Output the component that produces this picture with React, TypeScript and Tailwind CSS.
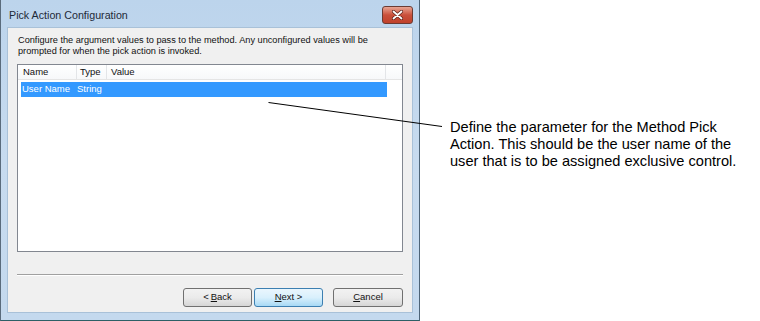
import React from "react";

export default function App() {
  const ui = { fontFamily: '"Liberation Sans", Arial, sans-serif' };
  return (
    <div className="relative w-[760px] h-[321px] bg-white flex" style={ui}>
      {/* Dialog window */}
      <div className="w-[420px] h-[321px] flex flex-col border-l border-l-[#5a6b7c] border-r border-r-[#4d6478] border-b border-b-[#2d5f66] bg-gradient-to-b from-[#bcd4ec] via-[#c7dbef] to-[#c4d9ee]">
        {/* Title bar */}
        <div className="h-[27px] flex items-center pl-[8px] pr-[5px] shrink-0">
          <span className="text-[10.7px] text-[#1e2a38] flex-1 pt-[3px]">Pick Action Configuration</span>
          <div className="w-[31px] h-[18px] mt-[3px] mr-[1px] rounded-[3px] border border-[#6b3b33] bg-gradient-to-b from-[#e8a493] via-[#c9503b] to-[#c0412b] flex items-center justify-center">
            <svg width="11" height="10" viewBox="0 0 11 10">
              <path d="M1.5 1.5 L9.5 8.5 M9.5 1.5 L1.5 8.5" stroke="#5a2018" strokeWidth="3.2" strokeLinecap="round" />
              <path d="M1.5 1.5 L9.5 8.5 M9.5 1.5 L1.5 8.5" stroke="#ffffff" strokeWidth="1.8" strokeLinecap="round" />
            </svg>
          </div>
        </div>
        {/* Client */}
        <div className="mx-[6px] mb-[7px] flex-1 border border-[#a9c1d8] bg-[#f0f0f0] flex flex-col pt-[7px] pl-[9px] pr-[9px]">
          <div className="text-[9.2px] leading-[11px] text-[#111] pl-[1px]">
            <div>Configure the argument values to pass to the method. Any unconfigured values will be</div>
            <div>prompted for when the pick action is invoked.</div>
          </div>
          {/* List */}
          <div className="mt-[7px] h-[188px] border border-[#828790] bg-white flex flex-col">
            <div className="h-[15px] flex text-[9.5px] text-[#111] border-b border-[#e5e5e5] bg-gradient-to-b from-white to-[#f7f8fa]">
              <div className="w-[59px] pl-[5px] flex items-center border-r border-[#e3e5e8]">Name</div>
              <div className="w-[30px] pl-[3px] flex items-center border-r border-[#e3e5e8]">Type</div>
              <div className="w-[279px] pl-[4px] flex items-center border-r border-[#e3e5e8]">Value</div>
              <div className="flex-1" />
            </div>
            <div className="mt-[2px] ml-[3px] w-[366px] h-[15px] bg-[#3399ff] flex items-center text-[9.5px] text-white">
              <div className="w-[56px] pl-[1px]">User Name</div>
              <div>String</div>
            </div>
          </div>
          {/* Separator */}
          <div className="mt-[22px] h-[1px] bg-[#a0a0a0] border-b border-white box-content" />
          {/* Buttons */}
          <div className="mt-[12px] flex justify-end text-[9.5px] text-[#111]">
            <button className="w-[69px] h-[19px] rounded-[3px] border border-[#707070] bg-gradient-to-b from-[#f2f2f2] via-[#ebebeb] to-[#d6d6d6] flex items-center justify-center">
              &lt; <span className="underline ml-[2px]">B</span>ack
            </button>
            <button className="ml-[2px] w-[69px] h-[19px] rounded-[3px] border border-[#3c7fb1] bg-gradient-to-b from-[#eaf6fd] via-[#d9f0fc] to-[#a7d9f5] flex items-center justify-center">
              <span className="underline">N</span>ext &gt;
            </button>
            <button className="ml-[10px] w-[70px] h-[19px] rounded-[3px] border border-[#707070] bg-gradient-to-b from-[#f2f2f2] via-[#ebebeb] to-[#d6d6d6] flex items-center justify-center">
              <span className="underline">C</span>ancel
            </button>
          </div>
        </div>
      </div>
      {/* Annotation text */}
      <div className="pl-[30px] pt-[119px] text-[14.6px] leading-[17px] text-black" style={{ fontFamily: '"Liberation Sans", Arial, sans-serif' }}>
        <div>Define the parameter for the Method Pick</div>
        <div>Action. This should be the user name of the</div>
        <div>user that is to be assigned exclusive control.</div>
      </div>
      {/* Leader line */}
      <svg className="absolute left-0 top-0 pointer-events-none" width="760" height="321">
        <line x1="268.5" y1="102.5" x2="442" y2="126.5" stroke="#000" strokeWidth="1" />
      </svg>
    </div>
  );
}
